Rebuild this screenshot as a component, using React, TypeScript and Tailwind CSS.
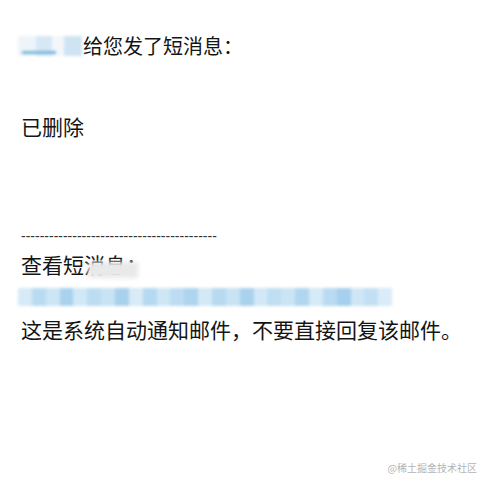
import React from 'react'

const cjk = { fontFamily: '"Noto Sans CJK SC", "Noto Sans", sans-serif' }

// 马赛克块：链接打码
const linkBlocks = [
  '#d6eaf7', '#b9dbf1', '#cde5f5', '#a9d2ee', '#d2e8f6', '#bcdcf2', '#c8e3f4', '#a8d1ed',
  '#d8ebf7', '#b5d9f0', '#cfe6f5', '#bddcf1', '#aed4ee', '#d4e9f6', '#b7daf0', '#c9e3f4',
  '#a9d2ee', '#d3e8f6', '#bfdef2', '#cbe4f5', '#b1d6ef', '#d6eaf7', '#b9dbf1', '#a6d0ed',
  '#cfe6f5', '#c3e0f3', '#d9ecf8',
]

export default function App() {
  return (
    <div className="w-[480px] h-[480px] bg-white text-[#141414] flex flex-col" style={cjk}>
      <div className="pl-[18px] pt-[32px] flex items-center h-[28px] box-content">
        <div className="relative w-[64px] h-[20px] blur-[1.5px] flex">
          <div className="w-[18px] h-full bg-[#eef5fa]" />
          <div className="w-[16px] h-full bg-[#d5e8f4]" />
          <div className="w-[12px] h-full bg-[#f3f7fa]" />
          <div className="w-[18px] h-full bg-[#cfe4f2]" />
          <div className="absolute left-[4px] top-[15px] w-[34px] h-[3px] bg-[#7db5da]" />
        </div>
        <span className="text-[20px] leading-[28px] ml-[1px]">给您发了短消息：</span>
      </div>

      <div className="pl-[21px] mt-[52px] text-[21px] leading-[28px]">已删除</div>

      <div
        className="pl-[21px] mt-[88px] text-[14px] leading-[16px] text-[#333]"
        style={{ fontFamily: '"Liberation Sans", Arial, sans-serif' }}
      >
        {'-'.repeat(42)}
      </div>

      <div className="pl-[21px] mt-[6px] text-[21px] leading-[28px] relative">
        查看短消息：
        <div className="absolute left-[88px] top-[12px] w-[50px] h-[16px] bg-[#e9e9e9] blur-[2px]" />
      </div>

      <div className="pl-[18px] mt-[10px] h-[18px] flex">
        <div className="flex w-[374px] h-full blur-[1.5px] bg-[#d4e9f6]">
          {linkBlocks.map((c, i) => (
            <div key={i} className="flex-1 h-full" style={{ backgroundColor: c }} />
          ))}
        </div>
      </div>

      <div className="pl-[21px] mt-[9px] text-[21px] leading-[28px]">
        这是系统自动通知邮件，不要直接回复该邮件。
      </div>

      <div className="mt-auto mb-[6px] pr-[3px] flex justify-end text-[10px] leading-[12px] text-[#b4b4b4]">
        @稀土掘金技术社区
      </div>
    </div>
  )
}
